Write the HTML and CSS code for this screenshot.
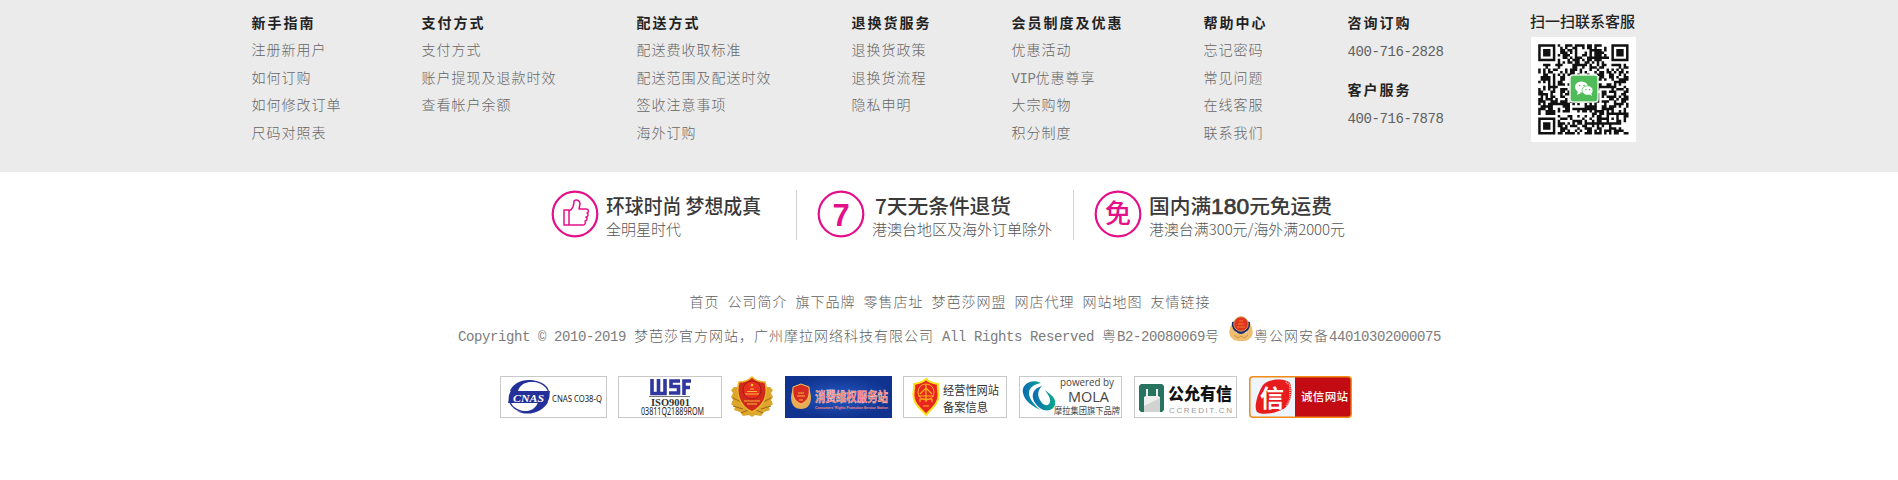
FILE: index.html
```html
<!DOCTYPE html>
<html lang="zh-CN">
<head>
<meta charset="utf-8">
<title>梦芭莎</title>
<link rel="stylesheet" href="styles.css">
</head>
<body>
<section class="help">
  <div class="help-inner">
    <dl class="col c1"><dt>新手指南</dt><dd>注册新用户</dd><dd>如何订购</dd><dd>如何修改订单</dd><dd>尺码对照表</dd></dl>
    <dl class="col c2"><dt>支付方式</dt><dd>支付方式</dd><dd>账户提现及退款时效</dd><dd>查看帐户余额</dd></dl>
    <dl class="col c3"><dt>配送方式</dt><dd>配送费收取标准</dd><dd>配送范围及配送时效</dd><dd>签收注意事项</dd><dd>海外订购</dd></dl>
    <dl class="col c4"><dt>退换货服务</dt><dd>退换货政策</dd><dd>退换货流程</dd><dd>隐私申明</dd></dl>
    <dl class="col c5"><dt>会员制度及优惠</dt><dd>优惠活动</dd><dd><span class="en">VIP</span>优惠尊享</dd><dd>大宗购物</dd><dd>积分制度</dd></dl>
    <dl class="col c6"><dt>帮助中心</dt><dd>忘记密码</dd><dd>常见问题</dd><dd>在线客服</dd><dd>联系我们</dd></dl>
    <dl class="col c7"><dt>咨询订购</dt><dd class="tel en">400-716-2828</dd><dt class="second">客户服务</dt><dd class="tel en">400-716-7878</dd></dl>
    <div class="scan">
      <p>扫一扫联系客服</p>
      <svg id="qr" width="105" height="105" viewBox="0 0 105 105"></svg>
    </div>
  </div>
</section>

<section class="promise">
  <svg width="245" height="50" viewBox="0 0 245 50">
    <circle class="ring" cx="24" cy="24" r="22.3"/>
    <path class="thumb" d="M13 20h5v15h-5zM18 21c4-2 5-5 5-10 2-2 6-1 6 3l-1 5h7c3 0 3 4 1 4 2 1 1 4-1 4 2 1 1 4-1 4 1 2 0 4-2 4H18"/>
    <text class="pt" x="55" y="24" textLength="155" lengthAdjust="spacingAndGlyphs">环球时尚 梦想成真</text>
    <text class="ps" x="55" y="45" textLength="75">全明星时代</text>
  </svg>
  <svg class="ruled" width="276" height="50" viewBox="0 0 276 50">
    <circle class="ring" cx="44" cy="24" r="22.3"/>
    <text class="seven" x="44" y="36" text-anchor="middle">7</text>
    <text class="pt" x="78" y="24" textLength="136" lengthAdjust="spacingAndGlyphs">7天无条件退货</text>
    <text class="ps" x="75" y="45" textLength="180">港澳台地区及海外订单除外</text>
  </svg>
  <svg class="ruled" width="290" height="50" viewBox="0 0 290 50">
    <circle class="ring" cx="44" cy="24" r="22.3"/>
    <text class="free" x="44" y="33" text-anchor="middle">免</text>
    <text class="pt" x="75" y="24" textLength="183" lengthAdjust="spacingAndGlyphs">国内满<tspan class="num">180</tspan>元免运费</text>
    <text class="ps" x="75" y="45" textLength="196" lengthAdjust="spacingAndGlyphs">港澳台满300元/海外满2000元</text>
  </svg>
</section>

<footer>
  <nav>首页 公司简介 旗下品牌 零售店址 梦芭莎网盟 网店代理 网站地图 友情链接</nav>
  <p class="copy"><span class="en">Copyright © 2010-2019 </span>梦芭莎官方网站，广州摩拉网络科技有限公司<span class="en"> All Rights Reserved </span>粤<span class="en">B2-20080069</span>号<svg class="police" width="24" height="26" viewBox="0 0 24 26"><path d="M3 8C-1 13 0 21 3 22c2 3 5 3 9 3s7 0 9-3c3-1 4-9 0-14l-4 9H7z" fill="#eebd70"/><path d="M3 6c4 0 5-4 9-4s5 4 9 4c1 6-3 11-9 12C6 17 2 12 3 6z" fill="#1d2a6c"/><circle cx="12" cy="8" r="7.200" fill="#df3420" stroke="#d69a50"/><path d="M8 11h8M9 8h6M10 5h4" stroke="#f47a28" stroke-width="1"/><path d="M5 19l4 3 3-2 3 2 4-3" stroke="#d39440" fill="none"/></svg>粤公网安备<span class="en">44010302000075</span></p>
  <div class="badges">
    <svg width="107" height="42" viewBox="0 0 107 42">
      <rect class="frame" x=".5" y=".5" width="106" height="41"/>
      <ellipse cx="29" cy="20.500" rx="20" ry="15" fill="none" stroke="#23309a" stroke-width="1.300" transform="rotate(-12 29 20)"/>
      <path d="M10 15C13 6 27 1 38 6 28 4 20 8 18 15zM48 26C43 36 28 41 17 35c12 2 19-2 21-9z" fill="#23309a"/>
      <path d="M11 15h39l-3 12H8z" fill="#23309a"/>
      <text x="13" y="25.500" textLength="31" lengthAdjust="spacingAndGlyphs" class="cnas">CNAS</text>
      <text x="52" y="26" textLength="50" lengthAdjust="spacingAndGlyphs" class="co">CNAS CO38-Q</text>
    </svg>
    <svg class="g11" width="104" height="42" viewBox="0 0 104 42">
      <rect class="frame" x=".5" y=".5" width="103" height="41"/>
      <path d="M34 3v14.500h13V3M40.500 3v14M62 5H53v5.500h7.500v6.500H51M66 19V5h7M66 11.500h6" fill="none" stroke="#3038a0" stroke-width="3.600"/>
      <path d="M31 20.500h41" stroke="#777"/>
      <text x="33" y="30" textLength="39" lengthAdjust="spacingAndGlyphs" class="iso">ISO9001</text>
      <text x="23" y="39" textLength="63" lengthAdjust="spacingAndGlyphs" class="rom">03811Q21889ROM</text>
    </svg>
    <svg class="g8" width="44" height="42" viewBox="0 0 44 42">
      <path d="M4 11l-3 3 2 3-2 4 2 3-2 4 4 3-1 3 6 2 3 4 6-1 3 2 3-2 6 1 3-4 6-2-1-3 4-3-2-4 2-3-2-4 2-3-3-3z" fill="#dca62d"/>
      <path d="M3 22l8 4M3 30l10 3M41 22l-8 4M41 30l-10 3M11 37l7-3M33 37l-7-3" stroke="#9d6718"/>
      <path d="M22 1c4 4 8 5 13 5 3 10 1 23-13 30C8 29 6 16 9 6c5 0 9-1 13-5z" fill="#d02a1b" stroke="#efb52c" stroke-width="1.500"/>
      <circle cx="22" cy="14" r="9" fill="#e8301f" stroke="#a81812"/>
      <path d="M15 18h14M17 15.500h10M20 13h4M14 25h16M17 28h10" stroke="#f7b738" stroke-width="1.200"/><circle cx="22" cy="9" r="1.300" fill="#ffc83d"/>
    </svg>
    <svg class="g10" width="107" height="42" viewBox="0 0 107 42">
      <defs><radialGradient id="blue"><stop stop-color="#2459c4"/><stop offset="1" stop-color="#10338f"/></radialGradient></defs>
      <rect width="107" height="42" fill="url(#blue)"/>
      <path d="M8 13c-4 9-2 20 8 20s12-11 8-20z" fill="#e9ad55"/><path d="M16 8l8 3c1 9-1 14-8 17-7-3-9-8-8-17z" fill="#d62b20" stroke="#f2c562"/><path d="M12 20h8M13 17h6M14 24h4" stroke="#ffb040"/>
      <text x="30" y="25" textLength="73" lengthAdjust="spacingAndGlyphs" class="rights">消费维权服务站</text>
      <text x="30" y="33" textLength="73" lengthAdjust="spacingAndGlyphs" class="rights-en">Consumers' Rights Protection Service Station</text>
    </svg>
    <svg class="g11" width="104" height="42" viewBox="0 0 104 42">
      <rect class="frame" x=".5" y=".5" width="103" height="41"/>
      <path d="M23 3c4 4 7 4 12 5-1 5 2 9 0 15-2 8-8 10-12 16-4-6-10-8-12-16-2-6 1-10 0-15 5-1 8-1 12-5z" fill="#e9251f" stroke="#ffe11b" stroke-width="2"/>
      <circle cx="23" cy="16" r="8" fill="none" stroke="#ffa81f"/><path d="M17 18l6-6 6 6M23 8v18M15 20h16M17 26v-3h12v3M20 30h6" stroke="#ffb51e" stroke-width="1.200" fill="none"/>
      <text x="40" y="19" textLength="56" lengthAdjust="spacingAndGlyphs" class="biz">经营性网站</text>
      <text x="40" y="36" textLength="45" lengthAdjust="spacingAndGlyphs" class="biz">备案信息</text>
    </svg>
    <svg class="g12" width="103" height="42" viewBox="0 0 103 42">
      <defs><linearGradient id="teal"><stop stop-color="#0b6bb5"/><stop offset="1" stop-color="#0aa88c"/></linearGradient></defs>
      <rect class="frame" x=".5" y=".5" width="102" height="41"/>
      <path d="M22 7C12 2 2 9 4 17c2 9 10 13 17 17-6-6-11-11-11-17 0-6 6-9 12-10z" fill="url(#teal)"/>
      <path d="M23 10C12 13 12 22 17 28c4 6 11 8 16 5 5-4 4-10-1-14l-6-5c4 6 7 10 4 14-3 3-7 0-9-4-3-5-2-10 2-14z" fill="url(#teal)"/>
      <text x="41" y="10" textLength="54" lengthAdjust="spacingAndGlyphs" class="pow">powered by</text>
      <text x="49" y="25.500" textLength="41" lengthAdjust="spacingAndGlyphs" class="mola">MOLA</text>
      <text x="35" y="38" textLength="66" lengthAdjust="spacingAndGlyphs" class="brand">摩拉集团旗下品牌</text>
    </svg>
    <svg class="g12" width="103" height="42" viewBox="0 0 103 42">
      <rect class="frame" x=".5" y=".5" width="102" height="41"/>
      <path d="M7 8h21l2 2v24l-2 2H7l-2-2V10z" fill="#28735f"/><path d="M10 36V21l2-1v-7h2v7h8v-7h2v7l2 1v15z" fill="#eee"/><path d="M10 30l16-8v14H10z" fill="#d2d2d2"/>
      <text x="34" y="24" textLength="64" lengthAdjust="spacingAndGlyphs" class="credit">公允有信</text>
      <text x="35" y="37" textLength="63" class="ccn">CCREDIT.CN</text>
    </svg>
    <svg class="g12" width="103" height="42" viewBox="0 0 103 42">
      <rect x=".8" y=".8" width="101.400" height="40.400" rx="3" fill="#edf4fb"/>
      <path d="M46 1h53q3 0 3 3v34q0 3-3 3H46z" fill="#c20b13"/>
      <rect x=".8" y=".8" width="101.400" height="40.400" rx="3" fill="none" stroke="#f18a16" stroke-width="1.500"/>
      <path d="M14 9C20 2 37 2 41 7c3 8 1 19-4 24-7 6-23 9-29 5-4-6 2-21 6-27z" fill="#e71c1c"/>
      <path d="M37 6l4 3v14l-4 8" stroke="#f4a8a8" stroke-width="2" stroke-dasharray="1 1" fill="none"/>
      <text x="11" y="31" class="xin">信</text>
      <text x="52" y="25" textLength="47" class="honest">诚信网站</text>
    </svg>
  </div>
</footer>
<script src="qr.js"></script>
</body>
</html>
```

FILE: styles.css
```css
body {
  margin: 0;
  background: #fff;
  color: #606060;
  font: 300 14px/28px "Liberation Mono", "Noto Sans CJK SC", monospace;
  letter-spacing: 1px;
}
dl, dd, p { margin: 0; }
svg { display: block; flex: none; letter-spacing: 0; }
.en { color: #7c7c7c; letter-spacing: -0.4px; white-space: pre; }

.help { height: 172px; background: #ebebeb; }
.help-inner { display: flex; padding: 11px 0 0 251.5px; white-space: nowrap; }
.col { flex: none; color: #666; line-height: 27.6px; }
.c1 { width: 170px; }
.c2, .c3 { width: 215px; }
.c4 { width: 160px; }
.c5 { width: 192px; }
.c6 { width: 144px; }
.c7 { width: 182.5px; }
dt { color: #222; font-weight: 700; letter-spacing: 2px; line-height: 27px; }
.tel { color: #606060; }
.second { margin-top: 12px; }
.c7 .tel { padding-top: 1px; line-height: 27px; }
.scan p { color: #222; font-size: 15px; line-height: 26px; letter-spacing: 0; font-weight: 500; }
.scan svg { margin-left: 1px; }

.promise { display: flex; margin: 18px 0 0 551px; }
.promise svg { font-family: "Noto Sans CJK SC", sans-serif; }
.ruled { border-left: 1px solid #d2d2d2; }
.ring { fill: none; stroke: #e4108a; stroke-width: 2.2; }
.thumb { fill: none; stroke: #e4108a; stroke-width: 1.5; stroke-linejoin: round; }
.pt { font-size: 20px; font-weight: 500; fill: #3a3a3a; }
.num { font: 400 22px "Liberation Sans", sans-serif; stroke: #3a3a3a; stroke-width: .7px; }
.ps { font-size: 15px; font-weight: 300; fill: #555; }
.seven { font: 700 31px "Liberation Sans", sans-serif; fill: #e4108a; }
.free { font-size: 26px; font-weight: 500; fill: #e4108a; }

nav { margin: 49px 0 0 689.5px; height: 28px; word-spacing: -1.4px; white-space: nowrap; }
.copy { margin: 6px 0 0 458px; height: 28px; white-space: nowrap; }
.police { display: inline-block; vertical-align: -1px; margin: -8px 1px 0 9px; }
.badges { display: flex; margin: 25px 0 0 500px; font-family: "Noto Sans CJK SC", sans-serif; }
.frame { fill: #fff; stroke: #c9c9c9; }
.g8 { margin: 0 1px 0 8px; }
.g10 { margin-left: 10px; }
.g11 { margin-left: 11px; }
.g12 { margin-left: 12px; }
.cnas { font: italic 700 11px "Liberation Serif", serif; fill: #fff; }
.co { font: 9.5px "Noto Sans", sans-serif; fill: #222; }
.iso { font: 700 10px "Liberation Serif", serif; fill: #333; }
.rom { font: 10px "Noto Sans", sans-serif; fill: #222; }
.rights { font-size: 13px; font-weight: 700; fill: #ff6b62; stroke: #ffe4df; stroke-width: .35px; }
.rights-en { font: 700 4px "Liberation Sans", sans-serif; fill: #ff8c85; }
.biz { font-size: 12px; font-weight: 400; fill: #333; }
.pow { font: 11px "Open Sans", sans-serif; fill: #444; }
.mola { font: 14px "Open Sans", sans-serif; fill: #444; }
.brand { font-size: 9.5px; font-weight: 400; fill: #444; }
.credit { font-size: 16.5px; font-weight: 900; fill: #111; }
.ccn { font: 8px "Liberation Sans", sans-serif; fill: #999; }
.xin { font-size: 24px; font-weight: 700; fill: #fff; }
.honest { font-size: 11.5px; font-weight: 500; fill: #fff; }
```

FILE: qr.js
```js
// Draws a 37-module QR-style code with a chat logo in the centre.
(function () {
  var n = 37, m = 2.44, off = 7.2, seed = 20197, d = '';
  function rnd() { seed = (seed * 1103515245 + 12345) % 2147483648; return seed / 2147483648; }
  function ring(x, y, cx, cy) { return Math.max(Math.abs(x - cx), Math.abs(y - cy)); }
  for (var y = 0; y < n; y++) {
    for (var x = 0; x < n; x++) {
      var on = rnd() < 0.5, c = [[3, 3], [33, 3], [3, 33]];
      for (var i = 0; i < 3; i++) {
        var r = ring(x, y, c[i][0], c[i][1]);
        if (r <= 4) on = r === 3 || r < 2;
      }
      var a = ring(x, y, 30, 30);
      if (a <= 2) on = a !== 1;
      if (on) d += 'M' + (off + x * m).toFixed(2) + ' ' + (off + y * m).toFixed(2) + 'h2.5v2.5h-2.5z';
    }
  }
  document.getElementById('qr').innerHTML =
    '<rect width="105" height="105" fill="#fff"/><path d="' + d + '" fill="#111"/>' +
    '<rect x="39" y="38" width="28" height="27" rx="3" fill="#50bb59" stroke="#e8f5e9" stroke-width="1.500"/>' +
    '<ellipse cx="50.500" cy="50" rx="6.500" ry="5.500" fill="#fff"/><path d="M47 54l-1 4 4-2z" fill="#fff"/>' +
    '<ellipse cx="56.500" cy="53.500" rx="5.500" ry="4.700" fill="#fff" stroke="#50bb59" stroke-width=".7"/><path d="M58 57l3 2-1-4z" fill="#fff"/>' +
    '<g fill="#50bb59"><circle cx="48.500" cy="48.500" r=".8"/><circle cx="53" cy="48.500" r=".8"/><circle cx="55" cy="52.500" r=".7"/><circle cx="58.500" cy="52.500" r=".7"/></g>';
})();
```
